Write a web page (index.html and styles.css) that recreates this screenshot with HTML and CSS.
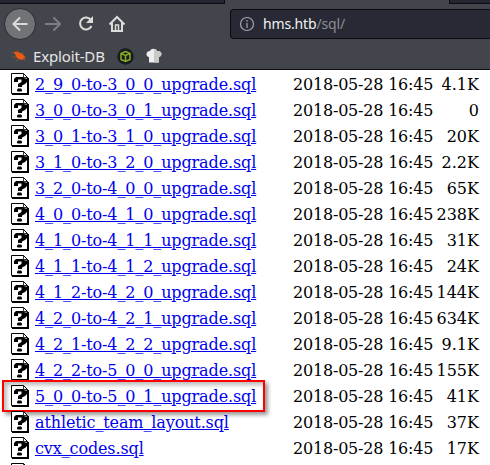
FILE: index.html
```html
<!DOCTYPE html>
<html lang="en">
<head>
<meta charset="utf-8">
<title>Index of /sql</title>
<link rel="stylesheet" href="styles.css">
</head>
<body>
<header class="chrome">
  <div class="tabs"><span class="tab-left"></span><span class="tab-active"></span><span class="tab-right"></span></div>
  <nav class="toolbar">
    <span class="back"><svg width="18" height="18" viewBox="0 0 18 18"><path d="M16.500 9H2M9 2.500L2.500 9 9 15.500"/></svg></span>
    <svg class="forward" width="18" height="18" viewBox="0 0 18 18"><path d="M0 9h15M8.500 2.500L15 9l-6.500 6.500"/></svg>
    <svg class="reload" width="18" height="18" viewBox="0 0 18 18"><path d="M14 5A6 6 0 1 0 14.5 11"/><path class="solid" d="M16 1v7H9z"/></svg>
    <svg class="home" width="18" height="18" viewBox="0 0 18 18"><path d="M1.500 9.500L9 2l7.500 7.500M4 8v8h10V8"/><path class="door" d="M7.500 16v-6h3v6"/></svg>
    <div class="address">
      <svg width="16" height="16" viewBox="0 0 16 16"><circle cx="8" cy="8" r="6.500"/><path d="M8 7v5M8 4v1.700"/></svg>
      <span class="url"><b>hms.htb</b>/sql/</span>
    </div>
  </nav>
  <div class="bookmarks">
    <svg class="bug" width="16" height="14" viewBox="0 0 16 14"><path class="body" d="M2 3C5 2 13 5 13 9c-2 3-8 2-9-2z"/><path class="legs" d="M0 3l3 1M5 1l2 3M11 3l-1 2M0 8h5M4 12l3-3M14 12l-3-3M12 8h2"/></svg>
    <span class="label">Exploit-DB</span>
    <svg class="cube" width="17" height="17" viewBox="0 0 17 17"><circle cx="8.500" cy="8.500" r="8.200"/><path d="M8.500 3.500l4.500 2v6l-4.500 2-4.500-2v-6zM4 5.500l4.500 2 4.500-2M8.500 7.500v6"/></svg>
    <svg class="hat" width="16" height="16" viewBox="0 0 16 16"><path class="light" d="M3 14.500V9C-1 8 0 3 4 3c1-3 6-3 7 0 5-1 6 5 2 6v5.500z"/><path class="shade" d="M8 1c2 0 3 1 3 2 5-1 6 5 2 6v5.500H8z"/></svg>
  </div>
</header>
<svg class="defs" width="0" height="0">
  <symbol id="unknown" viewBox="0 0 18 22">
    <path fill="#fff" stroke="#000" d="M.5.500h12l4 4v16H.5z"/>
    <path fill="none" stroke="#000" stroke-width=".8" d="M12.500.5v4h4"/>
    <path d="M16 5h2v17H1v-1h15z"/>
    <path d="M5 4h7l2 1.500h2V9l-2 2-3 1.500V14H7v-3l3.500-2V6.500H7V9H3V6z"/>
    <path d="M7 15.500h3l1 1V18l-1 .5H7L6 18v-1.500z"/>
  </symbol>
</svg>
<main class="listing">
  <div class="row"><svg class="icon"><use href="#unknown"/></svg><a href="#">2_9_0-to-3_0_0_upgrade.sql</a><time>2018-05-28 16:45</time><span class="size">4.1K</span></div>
  <div class="row"><svg class="icon"><use href="#unknown"/></svg><a href="#">3_0_0-to-3_0_1_upgrade.sql</a><time>2018-05-28 16:45</time><span class="size">0</span></div>
  <div class="row"><svg class="icon"><use href="#unknown"/></svg><a href="#">3_0_1-to-3_1_0_upgrade.sql</a><time>2018-05-28 16:45</time><span class="size">20K</span></div>
  <div class="row"><svg class="icon"><use href="#unknown"/></svg><a href="#">3_1_0-to-3_2_0_upgrade.sql</a><time>2018-05-28 16:45</time><span class="size">2.2K</span></div>
  <div class="row"><svg class="icon"><use href="#unknown"/></svg><a href="#">3_2_0-to-4_0_0_upgrade.sql</a><time>2018-05-28 16:45</time><span class="size">65K</span></div>
  <div class="row"><svg class="icon"><use href="#unknown"/></svg><a href="#">4_0_0-to-4_1_0_upgrade.sql</a><time>2018-05-28 16:45</time><span class="size">238K</span></div>
  <div class="row"><svg class="icon"><use href="#unknown"/></svg><a href="#">4_1_0-to-4_1_1_upgrade.sql</a><time>2018-05-28 16:45</time><span class="size">31K</span></div>
  <div class="row"><svg class="icon"><use href="#unknown"/></svg><a href="#">4_1_1-to-4_1_2_upgrade.sql</a><time>2018-05-28 16:45</time><span class="size">24K</span></div>
  <div class="row"><svg class="icon"><use href="#unknown"/></svg><a href="#">4_1_2-to-4_2_0_upgrade.sql</a><time>2018-05-28 16:45</time><span class="size">144K</span></div>
  <div class="row"><svg class="icon"><use href="#unknown"/></svg><a href="#">4_2_0-to-4_2_1_upgrade.sql</a><time>2018-05-28 16:45</time><span class="size">634K</span></div>
  <div class="row"><svg class="icon"><use href="#unknown"/></svg><a href="#">4_2_1-to-4_2_2_upgrade.sql</a><time>2018-05-28 16:45</time><span class="size">9.1K</span></div>
  <div class="row"><svg class="icon"><use href="#unknown"/></svg><a href="#">4_2_2-to-5_0_0_upgrade.sql</a><time>2018-05-28 16:45</time><span class="size">155K</span></div>
  <div class="row marked"><svg class="icon"><use href="#unknown"/></svg><a href="#">5_0_0-to-5_0_1_upgrade.sql</a><time>2018-05-28 16:45</time><span class="size">41K</span></div>
  <div class="row"><svg class="icon"><use href="#unknown"/></svg><a href="#">athletic_team_layout.sql</a><time>2018-05-28 16:45</time><span class="size">37K</span></div>
  <div class="row"><svg class="icon"><use href="#unknown"/></svg><a href="#">cvx_codes.sql</a><time>2018-05-28 16:45</time><span class="size">17K</span></div>
  <div class="row"><svg class="icon"><use href="#unknown"/></svg></div>
</main>
</body>
</html>
```
FILE: styles.css
```css
*, *::after { box-sizing: border-box; }
body { margin: 0; height: 465px; overflow: hidden; background: #fff; font: 16px/24px "DejaVu Serif", serif; color: #000; }
svg { display: block; flex: none; fill: none; }
.defs { position: absolute; }
.chrome { height: 70px; background: #42454c; border-bottom: 1px solid #0c0d13; font-family: "Noto Sans", sans-serif; }
.tabs { display: grid; grid-template-columns: 225px 224px 1fr; height: 4px; }
.tab-left, .tab-right { background: #232530; border-bottom: 1px solid #0c0d13; }
.tab-left { border-right: 1px solid #0c0d13; }
.tab-right { border-left: 1px solid #0c0d13; }
.toolbar { display: flex; align-items: center; height: 40px; padding-left: 4px; stroke: #dcdcd9; stroke-width: 2; }
.back { display: flex; align-items: center; justify-content: center; width: 32px; height: 32px; border: 1px solid #292b31; border-radius: 50%; background: #727376; }
.forward { margin-left: 9px; stroke: #7d7f82; }
.reload { margin-left: 14px; }
.reload .solid { fill: #dcdcd9; stroke: none; }
.home { margin-left: 13px; }
.home .door { stroke-width: 1.5; }
.address { display: flex; align-items: center; flex: 1; height: 30px; margin-left: 104px; padding-left: 8px; border: 1px solid #0c0d13; border-right: 0; border-radius: 4px 0 0 4px; background: #272934; }
.address svg { stroke: #a6a7ab; stroke-width: 1.2; }
.url { margin-left: 8px; font-size: 14px; letter-spacing: -.15px; color: #8c8e95; }
.url b { font-weight: 400; color: #f2f2f2; }
.bookmarks { display: flex; align-items: center; height: 24px; padding-left: 12px; font-size: 15px; color: #e6e6e6; }
.bug .body { fill: #e95b12; }
.bug .legs { stroke: #b9531f; stroke-width: .7; }
.label { margin-left: 5px; width: 74px; letter-spacing: -.15px; white-space: nowrap; }
.cube { margin-left: 10px; }
.cube circle { fill: #171b20; }
.cube path { stroke: #86ad21; stroke-width: 1.5; }
.hat { margin-left: 12px; }
.hat .light { fill: #eee; }
.hat .shade { fill: #c8c8c8; }
.listing { padding-top: 1px; }
.row { position: relative; display: grid; grid-template-columns: 24px 258px 141px 1fr; align-items: end; height: 26px; padding: 0 11px; white-space: nowrap; }
.icon { align-self: center; width: 18px; height: 22px; fill: #000; }
a { color: #00e; text-decoration: underline; letter-spacing: -.12px; }
time { letter-spacing: -.2px; }
.size { text-align: right; }
.marked::after { content: ""; position: absolute; left: 2px; top: -3px; width: 263px; height: 32px; border: 2px solid #f00; box-shadow: 3px 3px 4px #0006, inset 3px 3px 4px #0004; }
```
